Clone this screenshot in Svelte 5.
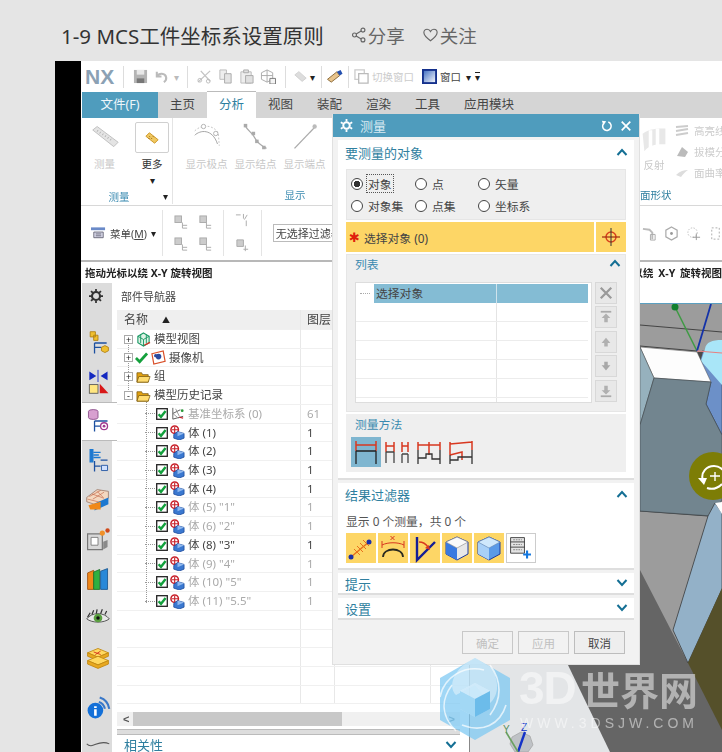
<script>
  const tabs = ["主页", "分析", "视图", "装配", "渲染", "工具", "应用模块"];
  const railIcons = ["assembly", "constraint", "part", "reuse", "role", "machine", "books", "eye", "stack", "info", "curve"];

  // kind: top = node directly under the root, child = feature under the history
  const rows = [
    { kind: "top", box: "+", icon: "view", name: "模型视图" },
    { kind: "top", box: "+", icon: "camera", check: "tick", name: "摄像机" },
    { kind: "top", box: "+", icon: "folder", name: "组" },
    { kind: "top", box: "-", icon: "folder", name: "模型历史记录" },
    { kind: "child", icon: "csys", name: "基准坐标系 (0)", layer: "61", muted: true },
    { kind: "child", icon: "body", name: "体 (1)", layer: "1" },
    { kind: "child", icon: "body", name: "体 (2)", layer: "1" },
    { kind: "child", icon: "body", name: "体 (3)", layer: "1" },
    { kind: "child", icon: "body", name: "体 (4)", layer: "1" },
    { kind: "child", icon: "body", name: '体 (5) "1"', layer: "1", muted: true },
    { kind: "child", icon: "body", name: '体 (6) "2"', layer: "1", muted: true },
    { kind: "child", icon: "body", name: '体 (8) "3"', layer: "1" },
    { kind: "child", icon: "body", name: '体 (9) "4"', layer: "1", muted: true },
    { kind: "child", icon: "body", name: '体 (10) "5"', layer: "1", muted: true },
    { kind: "child", icon: "body", name: '体 (11) "5.5"', layer: "1", muted: true },
    {}, {}, {}, {}, {}
  ];

  const radios = ["对象", "点", "矢量", "对象集", "点集", "坐标系"];
  const listButtons = ["x", "top", "up", "down", "bottom"];
</script>

{#snippet chevUp()}
  <svg class="chev" viewBox="0 0 12 8"><path d="M1.5 7 6 2l4.5 5" /></svg>
{/snippet}

{#snippet chevDown()}
  <svg class="chev" viewBox="0 0 12 8"><path d="M1.5 1 6 6l4.5-5" /></svg>
{/snippet}

{#snippet check()}
  <svg class="ic11" viewBox="0 0 12 12">
    <rect x=".7" y=".7" width="10.6" height="10.6" fill="#fff" stroke="#222" stroke-width="1.3" />
    <path d="M2.6 6.2 5 8.8 9.6 3" fill="none" stroke="#12a03c" stroke-width="2.4" />
  </svg>
{/snippet}

{#snippet treeIcon(name)}
  <svg class="ic15" viewBox="0 0 16 16">
    {#if name === "body"}
      <circle cx="5" cy="5" r="4" fill="#fff" stroke="#c8202a" stroke-width="1.6" />
      <path d="M2 5h7M5 2v7" stroke="#c8202a" stroke-width="1.2" />
      <path d="M4 10l4-3 7 2v5l-5 2-6-2z" fill="#3a78d0" stroke="#1c4a9a" stroke-width=".8" />
      <path d="M8 7v5l7-3" fill="#8fb8ee" />
    {:else if name === "folder"}
      <path d="M1 4h5l1 2h6v8H1z" fill="#e0a010" stroke="#7a5a10" stroke-width=".8" />
      <path d="M3 8h12l-2 6H1z" fill="#ffdc70" stroke="#7a5a10" stroke-width=".8" />
    {:else if name === "view"}
      <path d="M8 1l6 3.5v7L8 15l-6-3.5v-7z" fill="#dff3e6" stroke="#1c9a66" stroke-width="1.2" />
      <path d="M2 4.5 8 8l6-3.5M8 8v7M5 2.7v9M11 2.7v9" fill="none" stroke="#1c9a66" />
      <path d="M9 14l6-3" stroke="#d0392b" stroke-width="1.4" />
    {:else if name === "camera"}
      <path d="M1 4l12-3 2 11-12 3z" fill="#fff" stroke="#d8502a" stroke-width="1.3" />
      <circle cx="8" cy="7" r="3" fill="#2a4aa0" />
      <circle cx="5" cy="6" r="1.8" fill="#2a4aa0" />
    {:else}
      <path d="M3 2v12M3 14l11-3M3 8l8-4" fill="none" stroke="#555" />
      <path d="M3 8l6 5M6 3l4 8" fill="none" stroke="#999" />
      <circle cx="13" cy="5" r="1.5" fill="#2a9a3a" />
      <path d="M10 12l4 1" stroke="#c8202a" stroke-width="1.3" />
    {/if}
  </svg>
{/snippet}

{#snippet railIcon(name)}
  <svg class="rail-ic" viewBox="0 0 30 30">
    {#if name === "assembly"}
      <path d="M6 2h6v6H6zM10 6h5v6h-5z" fill="#f0c030" stroke="#b08010" />
      <path d="M11 15v12M11 20h8M11 15h14" fill="none" stroke="#1c50a0" stroke-width="1.5" />
      <path d="M19 20l4-2 4 2v4l-4 2-4-2z" fill="#f0c030" stroke="#b08010" />
    {:else if name === "constraint"}
      <path d="M5 3l8 5-8 5zM26 3l-8 5 8 5z" fill="#1428c0" />
      <path d="M15 1v14" stroke="#1428c0" />
      <rect x="5" y="18" width="10" height="10" fill="#ffe680" stroke="#555" />
      <path d="M17 28V17l10 11z" fill="#d81818" />
    {:else if name === "part"}
      <path d="M4 4a5 2 0 0 1 11 0v7a5 2 0 0 1-11 0z" fill="#d8a0d0" stroke="#884a88" />
      <path d="M11 15v12M11 21h7M11 15h15" fill="none" stroke="#1c50a0" stroke-width="1.5" />
      <circle cx="22" cy="21" r="4" fill="#fff" stroke="#a03a90" stroke-width="1.5" />
      <circle cx="22" cy="21" r="1.6" fill="#a03a90" />
    {:else if name === "reuse"}
      <path d="M6 2h3v14H6zM10 5h8M10 8h6M10 11h8" stroke="#1c78d0" stroke-width="1.6" fill="#1c78d0" />
      <path d="M11 15v12M11 21h7M18 14h8" fill="none" stroke="#1c50a0" stroke-width="1.5" />
      <path d="M19 20h7v6h-7z" fill="#cfe0ff" stroke="#1c50a0" />
    {:else if name === "role"}
      <path d="M2 12 14 3l13 2v8L17 22 2 17z" fill="#f4d8c0" stroke="#a08070" />
      <path d="M5 11l13-7M9 14l13-8M3 14l16 4M8 8l14 5M14 5l7 7" stroke="#c06040" stroke-width=".7" />
      <path d="M11 19l16-7v8l-16 7z" fill="#1c78d0" />
      <path d="M4 21l14-4v9H6z" fill="#f08818" />
    {:else if name === "machine"}
      <path d="M3 8h17v18H3z" fill="#d8d8d8" stroke="#777" stroke-width="1.4" />
      <path d="M7 12h8v9H7z" fill="#fff" stroke="#777" />
      <path d="M21 17l5-2v8l-5 3z" fill="#8a8a8a" />
      <circle cx="20" cy="7" r="3" fill="#f09028" />
      <circle cx="26" cy="4" r="2.5" fill="#d04818" />
    {:else if name === "books"}
      <path d="M3 8l7-3v22H3z" fill="#f08818" stroke="#a05010" />
      <path d="M10 7l7-3v23h-7z" fill="#30b040" stroke="#207028" />
      <path d="M18 6l8-3v24h-8z" fill="#2888d8" stroke="#1c5890" />
    {:else if name === "eye"}
      <path d="M2 16c6-8 20-8 26 0-6 5-20 5-26 0z" fill="#e8e8e8" stroke="#444" />
      <circle cx="15" cy="15" r="5" fill="#5aa040" />
      <circle cx="15" cy="15" r="2" fill="#111" />
      <path d="M3 14l3-5M8 11l2-5M13 10l1-5M18 10l2-5M23 11l2-4" stroke="#333" stroke-width="1.4" />
    {:else if name === "stack"}
      <path d="M3 9 15 4l12 5-12 5z" fill="#ffd860" stroke="#c08810" />
      <path d="M3 9v4l12 5 12-5V9l-12 5z" fill="#e8a820" stroke="#c08810" />
      <path d="M3 18l12-5 12 5-12 5z" fill="#ffd860" stroke="#c08810" />
      <path d="M3 18v4l12 5 12-5v-4l-12 5z" fill="#e8a820" stroke="#c08810" />
      <path d="M10 8l8 3M18 7l-6 4" stroke="#d02818" />
    {:else if name === "info"}
      <circle cx="12" cy="18" r="9" fill="#1470d8" />
      <path d="M10.5 13h3v2h-3zM10.5 16.5h3V24h-3z" fill="#fff" />
      <path d="M17 3c6 2 10 6 11 13M16 8c4 1 6 4 7 8" fill="none" stroke="#3a78c8" stroke-width="2.4" />
    {:else}
      <path d="M2 16c7 7 13-6 26 0" fill="none" stroke="#555" stroke-width="1.2" />
      <path d="M15 27l-3 3h6z" fill="#bbb" />
    {/if}
  </svg>
{/snippet}

<div class="page">
  <header class="pagehead">
    <h1>1-9 MCS工件坐标系设置原则</h1>
    <span class="act share">
      <svg viewBox="0 0 16 18"><circle cx="13" cy="3.5" r="2.2" /><circle cx="3.5" cy="9" r="2.2" /><circle cx="13" cy="14.5" r="2.2" /><path d="M5.4 7.9 11 4.6M5.4 10.1 11 13.4" /></svg>
      分享
    </span>
    <span class="act">
      <svg viewBox="0 0 17 16"><path d="M8.5 14.5C3 10.5 1 8 1 5.2 1 3 2.7 1.5 4.7 1.5c1.6 0 3 .9 3.8 2.5.8-1.6 2.2-2.5 3.800-2.500 2 0 3.700 1.500 3.700 3.700 0 2.800-2 5.300-7.500 9.300z" /></svg>
      关注
    </span>
  </header>

  <section class="video">
    <div class="nx">
      <!-- quick access bar -->
      <div class="quick">
        <span class="logo">NX</span>
        <i class="vsep"></i>
        <svg class="q" viewBox="0 0 16 16"><path d="M1 1h14v14H1z" fill="#b4b4b4" /><path d="M4 1h8v5H4z" fill="#e8e8e8" /><path d="M4 10h8v5H4z" fill="#777" /></svg>
        <svg class="q" viewBox="0 0 16 16"><path d="M3 3v5h5M3.5 8C5 4 12 4 13 9c.3 2-1 4-2.5 5" fill="none" stroke="#bbb" stroke-width="2.2" /></svg>
        <span class="caret faint">▾</span>
        <i class="vsep"></i>
        <svg class="q" viewBox="0 0 16 16"><path d="M1 14 14 2M4 2l10 11" stroke="#c4c4c4" stroke-width="1.4" /><circle cx="3" cy="12" r="2" fill="none" stroke="#bbb" /><circle cx="12" cy="13" r="2" fill="none" stroke="#bbb" /></svg>
        <svg class="q" viewBox="0 0 16 16"><path d="M2 1h7v10H2z" fill="#eee" stroke="#bbb" /><path d="M7 5h7v10H7z" fill="#e4e4e4" stroke="#aaa" /></svg>
        <svg class="q" viewBox="0 0 16 16"><path d="M2 3h11v12H2z" fill="#eee" stroke="#bbb" /><path d="M5 1h5v3H5zM7 7h8v8H7z" fill="#e0e0e0" stroke="#aaa" /></svg>
        <svg class="q wide" viewBox="0 0 16 16"><path d="M7 1 13 4v7l-6 3-6-3V4z" fill="none" stroke="#aaa" /><path d="M1 7h12M7 1v13" stroke="#aaa" /><path d="M10 10h6v6h-6z" fill="#f4f4f4" stroke="#777" /></svg>
        <i class="vsep"></i>
        <svg class="q small" viewBox="0 0 16 16"><path d="M1 6l5-4 9 8-5 4z" fill="#ddd" stroke="#ccc" /></svg>
        <span class="caret">▾</span>
        <i class="vsep"></i>
        <svg class="q eraser" viewBox="0 0 18 16"><path d="M1 11 11 3l3 4-9 7z" fill="#e8c48c" stroke="#8a6a3a" /><path d="M11 3l4-2 2 4-3 2z" fill="#2450b0" /></svg>
        <i class="vsep"></i>
        <svg class="q switch" viewBox="0 0 16 16"><path d="M1 1h10v10H1z" fill="none" stroke="#ccc" stroke-width="1.4" /><path d="M5 5h10v10H5z" fill="#fff" stroke="#bbb" stroke-width="1.4" /></svg>
        <span class="qtext faint">切换窗口</span>
        <svg class="q win" viewBox="0 0 16 16"><defs><linearGradient id="winfill" x1="0" y1="0" x2="1" y2="1"><stop offset="0" stop-color="#3a6ac0" /><stop offset="1" stop-color="#fff" /></linearGradient></defs><rect x="1" y="1" width="14" height="14" fill="url(#winfill)" stroke="#14308c" stroke-width="2" /></svg>
        <span class="qtext">窗口</span>
        <span class="caret">▾</span>
        <span class="caret bar">▾</span>
      </div>

      <!-- ribbon tabs -->
      <nav class="tabs">
        <span class="file">文件(F)</span>
        {#each tabs as t, i}
          <span class="tab" class:active={i === 1}>{t}</span>
        {/each}
      </nav>

      <!-- ribbon -->
      <div class="ribbon">
        <div class="group first">
          <div class="items">
            <div class="tool dim">
              <svg class="big" viewBox="0 0 32 32"><path d="M2 8l5-4 24 18-5 5z" fill="#e4e4e4" stroke="#bbb" /><path d="M8 8l-1 2M11 10l-1 2M14 12l-1 2M17 14l-1 2M20 16l-1 2M23 18l-1 2" stroke="#aaa" /></svg>
              <span>测量</span>
            </div>
            <div class="tool more">
              <div class="morebox"><svg viewBox="0 0 16 16"><path d="M1 6l4-4 10 8-4 4z" fill="#f0c860" stroke="#c89020" /><path d="M5 6l1 1M7 8l1 1M9 6l1 1M4 8l1 1" stroke="#8a5a10" /></svg></div>
              <span>更多</span>
              <span class="caret">▾</span>
            </div>
          </div>
          <div class="gname"><b>测量</b><span class="caret gcaret">▾</span></div>
        </div>
        <div class="group second">
          <div class="items">
            <div class="tool dim wide">
              <svg class="big" viewBox="0 0 32 32"><path d="M2 14C8 8 22 6 28 24" fill="none" stroke="#999" /><path d="M2 9C10 1 24 2 29 12l1 14" fill="none" stroke="#bbb" stroke-dasharray="2 2" /><circle cx="12" cy="4" r="2.5" fill="#fff" stroke="#aaa" /><circle cx="26" cy="12" r="2.5" fill="#fff" stroke="#aaa" /></svg>
              <span>显示极点</span>
            </div>
            <div class="tool dim wide">
              <svg class="big" viewBox="0 0 32 32"><path d="M3 2c4 8 8 8 11 14s8 10 14 13" fill="none" stroke="#aaa" stroke-width="1.5" /><rect x="2" y="1" width="4" height="4" fill="#aaa" /><rect x="11" y="10" width="4" height="4" fill="#aaa" /><rect x="15" y="19" width="4" height="4" fill="#aaa" /><rect x="23" y="26" width="4" height="4" fill="#aaa" /></svg>
              <span>显示结点</span>
            </div>
            <div class="tool dim wide">
              <svg class="big" viewBox="0 0 32 32"><path d="M4 29 27 5" stroke="#aaa" stroke-width="1.5" /><circle cx="27" cy="4" r="2.5" fill="#bbb" /></svg>
              <span>显示端点</span>
            </div>
          </div>
          <div class="gname center"><b>显示</b></div>
        </div>
        <div class="group third">
          <div class="items">
            <div class="tool dim">
              <svg class="big" viewBox="0 0 32 32"><path d="M3 10c8-6 16-6 26-6v18c-10 0-18 0-24 8z" fill="#e8e8e8" /><path d="M12 6v20M20 4v20" stroke="#fff" stroke-width="4" /></svg>
              <span>反射</span>
            </div>
            <div class="stacked">
              <span><svg viewBox="0 0 14 12"><path d="M1 2l12-1M1 6l12-2M1 10l12-2" stroke="#ccc" stroke-width="2" /></svg>高亮线</span>
              <span><svg viewBox="0 0 14 12"><path d="M2 10 7 1l6 5-3 5z" fill="#bbb" /></svg>拔模分</span>
              <span><svg viewBox="0 0 14 12"><path d="M1 8c4-4 8-5 12-5-3 2-5 4-7 7z" fill="#ddd" /></svg>面曲率</span>
            </div>
          </div>
          <div class="gname"><b>面形状</b></div>
        </div>
      </div>

      <!-- selection bar -->
      <div class="selbar">
        <svg class="menu-ic" viewBox="0 0 16 14"><path d="M0 1h15v3H0z" fill="#6a8ac8" /><path d="M3 6h10v6H3z" fill="#dde" stroke="#667" /><path d="M5 8h6M5 10h6" stroke="#667" /></svg>
        <span class="menu-t">菜单(<u>M</u>)</span>
        <span class="caret">▾</span>
        <i class="vsep tall s1"></i>
        <div class="quad">
          {#each [0, 1, 2, 3] as k}
            <svg viewBox="0 0 16 16"><rect x="{k % 2 ? 2 : 1}" y="1" width="7" height="7" fill="#ccc" stroke="#aaa" /><path d="M9 8v6h5M9 11h5" fill="none" stroke="#aaa" /></svg>
          {/each}
        </div>
        <i class="vsep tall"></i>
        <div class="duo">
          <svg viewBox="0 0 16 16"><path d="M1 2h5M9 1v5M13 2l-3 5M12 8v6" stroke="#aaa" fill="none" /></svg>
          <svg viewBox="0 0 16 16"><path d="M2 2h7v7H2z" fill="#ccc" stroke="#aaa" /><path d="M11 8v6M9 12h5" stroke="#aaa" /></svg>
        </div>
        <i class="vsep tall"></i>
        <span class="combo">无选择过滤器</span>
        <div class="selright">
          <svg viewBox="0 0 16 16"><path d="M1 3l7 1 3 3v7" fill="none" stroke="#bbb" stroke-width="2" /><path d="M9 9h5v6H9z" fill="none" stroke="#aaa" /></svg>
          <svg viewBox="0 0 16 16"><path d="M8 1l6 3.5v7L8 15l-6-3.5v-7z" fill="none" stroke="#aaa" stroke-width="1.3" /><circle cx="8" cy="8" r="1.5" fill="#999" /></svg>
          <svg viewBox="0 0 16 16"><circle cx="7" cy="7" r="5" fill="none" stroke="#bbb" stroke-dasharray="1.5 1.5" /><path d="M7 12h8M11 8v7" stroke="#999" /></svg>
          <svg viewBox="0 0 16 16"><path d="M4 2h8v12H4z" fill="none" stroke="#aaa" stroke-dasharray="2 2" /></svg>
        </div>
      </div>

      <div class="cue">
        <span>拖动光标以绕 X-Y 旋转视图</span>
        <span class="cue-r">拖动光标以绕 X-Y 旋转视图</span>
      </div>

      <div class="main">
        <!-- resource bar -->
        <aside class="rail">
          <svg class="gear" viewBox="0 0 16 16"><circle cx="8" cy="8" r="4.6" fill="none" stroke="#333" stroke-width="2.4" /><path d="M8 0v3M8 13v3M0 8h3M13 8h3M2.3 2.3l2.2 2.2M11.5 11.5l2.2 2.2M2.3 13.7l2.2-2.2M11.5 4.5l2.2-2.2" stroke="#333" stroke-width="2" /></svg>
          {#each railIcons as name}
            <div class="rail-item {name}" class:current={name === "part"}>
              {@render railIcon(name)}
            </div>
          {/each}
        </aside>

        <!-- part navigator -->
        <div class="navigator">
          <div class="navtitle">部件导航器</div>
          <div class="colhead row">
            <span class="name">名称 <em>▲</em></span>
            <span class="layer">图层</span>
            <span></span>
            <span></span>
          </div>
          <div class="tree">
            <i class="trunk root"></i>
            <i class="trunk hist"></i>
            {#each rows as r}
              <div class="row" class:muted={r.muted}>
                <span class="name {r.kind ?? ''}">
                  {#if r.kind === "top"}
                    <b class="box">{r.box}</b>
                    {#if r.check}
                      <svg class="tick" viewBox="0 0 14 12"><path d="M1 6l4 4 8-9" fill="none" stroke="#14a03c" stroke-width="3" /></svg>
                    {/if}
                    {@render treeIcon(r.icon)}
                  {:else if r.kind === "child"}
                    <i class="twig"></i>
                    {@render check()}
                    {@render treeIcon(r.icon)}
                  {/if}
                  <span class="label">{r.name ?? ""}</span>
                </span>
                <span class="layer">{r.layer ?? ""}</span>
                <span></span>
                <span></span>
              </div>
            {/each}
          </div>
          <div class="hscroll">
            <span class="arrow">&lt;</span>
            <span class="thumb"></span>
            <span class="arrow end">&gt;</span>
          </div>
          <div class="dbl"></div>
          <div class="related">
            <span>相关性</span>
            {@render chevDown()}
          </div>
        </div>

        <!-- graphics window -->
        <div class="view">
          <div class="viewtop"></div>
          <svg class="scene" viewBox="470 304 252 448" preserveAspectRatio="none">
            <rect x="470" y="304" width="252" height="448" fill="#e3e5e7" />
            <path d="M568 665 610 752H722V304H540z" fill="#656565" />
            <path d="M640 304h82v200l-14 12-35 114 15 33-48-93z" fill="#9c9c9c" />
            <path d="M640 325l82 7M640 346l57 5M640 511l68 5" stroke="#444" fill="none" />
            <path d="M722 352l-20-1-7 26 16 5-5 22 16 31z" fill="#6c90c8" stroke="#2d3d55" stroke-width=".6" />
            <path d="M722 340c-10 0-16 2-17 9l-4 12 21 24z" fill="#a9e6f8" />
            <path d="M697 352h6l-3 10z" fill="#4a4a4a" />
            <path d="M640 347l57 5 14 30-57-4z" fill="#fdfdfd" stroke="#555" stroke-width=".5" />
            <path d="M640 347l14 31-14 47z" fill="#96b1bd" stroke="#444" stroke-width=".5" />
            <path d="M654 378l57 4-5 22 16 31v65l-10 16-72-5v-86z" fill="#72858f" stroke="#3c444a" stroke-width=".6" />
            <path d="M708 516l7-13 7 10v76l-34 74-15-33z" fill="#93b1c8" stroke="#333" stroke-width=".7" />
            <path d="M715 503l7-1v12z" fill="#fff" />
            <path d="M722 588l-34 75 34 67z" fill="#55502a" />
            <path d="M675 307l22 44" stroke="#3f9a44" stroke-width="1.5" />
            <circle cx="675" cy="307" r="3.5" fill="#12802e" />
            <path d="M711 304l-14 47" stroke="#1432a8" stroke-width="1.8" />
            <path d="M697 351l25 2" stroke="#e88080" stroke-width="1.2" />
            <circle cx="713" cy="476" r="24" fill="#7d7d06" />
            <path d="M703 481c-3-9 4-15 11-15 4 0 7 2 9 4M722 484c-4 4-9 6-15 4" fill="none" stroke="#fff" stroke-width="2" />
            <path d="M698 478l9 0-3 7z" fill="#fff" />
            <path d="M715 472v9M710 476h10" stroke="#fff" stroke-width="1.4" />
            <!-- triad -->
            <path d="M512 737l9-5 9 4 3 9-5 7h-13l-5-8z" fill="#bfc2c6" stroke="#9a9a9a" stroke-width=".6" />
            <path d="M518 752l7-20" stroke="#1432c8" stroke-width="2.4" />
            <path d="M518 752l-12-20" stroke="#6aa060" stroke-width="1.6" />
            <text x="503" y="733" class="tri" fill="#5a9060">Y</text>
            <text x="521" y="731" class="tri" fill="#1432c8">Z</text>
          </svg>
        </div>
      </div>

      <!-- measure dialog -->
      <div class="dialog">
        <div class="dlg-title">
          <svg class="dlg-gear" viewBox="0 0 16 16"><circle cx="8" cy="8" r="4" fill="none" stroke="#fff" stroke-width="2.4" /><path d="M8 0v3M8 13v3M1 4l2.5 1.5M12.5 10.5 15 12M1 12l2.5-1.5M12.5 5.5 15 4" stroke="#fff" stroke-width="2.2" /></svg>
          <span>测量</span>
          <svg class="dlg-btn" viewBox="0 0 14 14"><path d="M8.5 2.4A5 5 0 1 1 3 4" fill="none" stroke="#fff" stroke-width="1.8" /><path d="M1 1l5 .5L3 6z" fill="#fff" /></svg>
          <svg class="dlg-btn" viewBox="0 0 14 14"><path d="M2 2l10 10M12 2 2 12" stroke="#fff" stroke-width="2" /></svg>
        </div>

        <div class="sec s1">
          <div class="sec-head"><span>要测量的对象</span>{@render chevUp()}</div>
          <div class="radios">
            {#each radios as r, i}
              <span class="radio" class:on={i === 0}><i></i><em>{r}</em></span>
            {/each}
          </div>
          <div class="pick">
            <div class="pick-main"><b>✱</b><span>选择对象 (0)</span></div>
            <div class="pick-btn">
              <svg viewBox="0 0 20 20"><circle cx="10" cy="10" r="5" fill="none" stroke="#d8401c" stroke-width="1.4" /><path d="M1 10h18" stroke="#a02a10" stroke-width="1.2" /><path d="M10 1v18" stroke="#333" stroke-width="1" /></svg>
            </div>
          </div>
          <div class="listbox">
            <div class="list-head"><span>列表</span>{@render chevUp()}</div>
            <div class="list-body">
              <div class="table">
                {#each [0, 1, 2, 3, 4, 5, 6] as n}
                  <div class="trow" class:sel={n === 0}>
                    <span>{#if n === 0}<u></u>选择对象{/if}</span>
                    <span></span>
                  </div>
                {/each}
              </div>
              <div class="side">
                {#each listButtons as b}
                  <div class="side-btn">
                    <svg viewBox="0 0 16 16">
                      {#if b === "x"}
                        <path d="M2 2l12 12M14 2 2 14" stroke="#9a9a9a" stroke-width="2.6" />
                      {:else if b === "top"}
                        <path d="M2 2h12" stroke="#aaa" stroke-width="2" /><path d="M8 4l5 5h-3v5H6V9H3z" fill="#b0b0b0" />
                      {:else if b === "up"}
                        <path d="M8 3l5 6h-3v4H6V9H3z" fill="#b0b0b0" />
                      {:else if b === "down"}
                        <path d="M8 13 3 7h3V3h4v4h3z" fill="#a8a8a8" />
                      {:else}
                        <path d="M2 14h12" stroke="#aaa" stroke-width="2" /><path d="M8 12 3 7h3V2h4v5h3z" fill="#b0b0b0" />
                      {/if}
                    </svg>
                  </div>
                {/each}
              </div>
            </div>
          </div>
          <div class="method">
            <div class="method-t">测量方法</div>
            <div class="method-icons">
              <svg class="m cur" viewBox="0 0 30 30"><path d="M5 8h20M5 4v10M25 4v10" fill="none" stroke="#d83820" stroke-width="1.5" /><path d="M5 14h20M5 14v13M25 14v13" fill="none" stroke="#222" stroke-width="1.3" /></svg>
              <svg class="m" viewBox="0 0 30 30"><path d="M3 9h8M3 5v10M11 5v10M19 9h6M19 5v10M25 5v10" fill="none" stroke="#d83820" stroke-width="1.5" /><path d="M3 15h8M3 15v11M11 15v11M19 17h6M19 17v9M25 17v9" fill="none" stroke="#444" stroke-width="1.3" /></svg>
              <svg class="m" viewBox="0 0 30 30"><path d="M3 8h22M3 5v8M14 5v13M25 5v8" fill="none" stroke="#d83820" stroke-width="1.5" /><path d="M3 13v14M3 21h8v-4h6v5h8M25 13v14" fill="none" stroke="#333" stroke-width="1.3" /></svg>
              <svg class="m" viewBox="0 0 30 30"><path d="M3 7l22-2M3 5v13M25 4v9M3 18l12-3v8" fill="none" stroke="#d83820" stroke-width="1.5" /><path d="M3 18v9M3 23h8v-3h14M25 13v14" fill="none" stroke="#333" stroke-width="1.3" /></svg>
            </div>
          </div>
        </div>

        <div class="sec s2">
          <div class="sec-head"><span>结果过滤器</span>{@render chevUp()}</div>
          <div class="count">显示 0 个测量，共 0 个</div>
          <div class="filters">
            <div class="f"><svg viewBox="0 0 30 30"><path d="M5 24 24 8" stroke="#e8701c" stroke-width="1.5" /><path d="M8 16l6 6M11 13l6 6M14 10l6 6M17 7l6 6" stroke="#e8701c" /><circle cx="5" cy="24" r="2.5" fill="#1c30a8" /><circle cx="23" cy="9" r="2.5" fill="#1c30a8" /></svg></div>
            <div class="f"><svg viewBox="0 0 30 30"><path d="M5 24C5 14 25 14 25 24" fill="none" stroke="#2a2a20" stroke-width="1.8" /><path d="M4 12c6-3 16-3 22 0" fill="none" stroke="#d83820" /><path d="M4 8v7M26 8v7" stroke="#d83820" /><path d="M12.5 3l4 4M16.5 3l-4 4" stroke="#d83820" /></svg></div>
            <div class="f"><svg viewBox="0 0 30 30"><path d="M7 4v23L25 9" fill="none" stroke="#141e96" stroke-width="2.4" /><path d="M9 9c4 0 7 2 9 5" fill="none" stroke="#d83820" stroke-width="1.4" /><path d="M20 17l-5-2 4-3z" fill="#d83820" /></svg></div>
            <div class="f"><svg viewBox="0 0 30 30"><path d="M15 4l11 5v12l-11 6-11-6V9z" fill="#e8e8e8" stroke="#1c3aa0" /><path d="M4 9l11 6v12L4 21z" fill="#3a7ae0" /><path d="M15 4l11 5-11 6L4 9z" fill="#fafafa" stroke="#888" stroke-width=".6" /></svg></div>
            <div class="f"><svg viewBox="0 0 30 30"><path d="M15 4l11 5v12l-11 6-11-6V9z" fill="#5a9ae8" stroke="#1c3aa0" /><path d="M4 9l11 6v12L4 21z" fill="#a8d0f8" /><path d="M15 4l11 5-11 6L4 9z" fill="#cfe8fc" stroke="#6a8ab0" stroke-width=".6" /></svg></div>
            <div class="f plain"><svg viewBox="0 0 30 30"><path d="M3 3h16v18H3z" fill="#e4e4e4" stroke="#333" /><path d="M3 8h16M3 14h16" stroke="#333" /><path d="M6 5.5h10M6 11h10M6 17h10" stroke="#777" stroke-dasharray="2 1" /><path d="M22 18v9M17.5 22.5h9" stroke="#1478e0" stroke-width="2.4" /></svg></div>
          </div>
        </div>

        <div class="sec folded"><div class="sec-head"><span>提示</span>{@render chevDown()}</div></div>
        <div class="sec folded"><div class="sec-head"><span>设置</span>{@render chevDown()}</div></div>

        <div class="dlg-foot">
          <button disabled>确定</button>
          <button disabled>应用</button>
          <button>取消</button>
        </div>
      </div>
    </div>
    <div class="black"></div>
  </section>

  <!-- site watermark -->
  <div class="mark">
    <svg class="hex" viewBox="0 0 70 82">
      <path d="M35 0 70 20v42L35 82 0 62V20z" fill="#7cc8f2" fill-opacity=".72" />
      <path d="M35 0 52 10c8 16 6 28-2 35L35 27 16 37C8 29 12 11 35 0z" fill="#fff" fill-opacity=".42" />
      <path d="M0 39C4 19 24 7 44 12M66 47C60 67 42 75 22 67M50 7c12 16 12 34 0 50M16 73C2 59 0 43 12 27" fill="none" stroke="#fff" stroke-opacity=".7" stroke-width="1.6" />
      <path d="M20 33 35 25l15 8v18l-15 8-15-8z" fill="#fff" fill-opacity=".25" />
      <path d="M20 33l15 8 15-8-15-8z" fill="#cfeafa" fill-opacity=".85" />
      <path d="M35 41l15-8v18l-15 8z" fill="#6cbcea" />
      <path d="M20 33l15 8v18l-15-8z" fill="#a2d8f5" />
    </svg>
    <div class="mark-t">
      <div class="cn"><span>3D</span>世界网</div>
      <div class="en">WWW.3DSJW.COM</div>
    </div>
  </div>
</div>

<style>
  :global(body) {
    margin: 0;
    background: #e5e5e5;
  }
  .page {
    position: relative;
    width: 722px;
    height: 752px;
    overflow: hidden;
    font-family: "Noto Sans", "Noto Sans CJK SC", sans-serif;
  }
  .pagehead {
    height: 61px;
    display: flex;
    align-items: center;
    padding: 9px 0 0 61px;
    box-sizing: border-box;
    color: #666;
  }
  h1 {
    margin: 0 27px 0 0;
    font-size: 20.5px;
    font-weight: 400;
    color: #333;
    white-space: nowrap;
  }
  .act {
    display: flex;
    align-items: center;
    gap: 2px;
    font-size: 18.5px;
    margin-right: 18px;
  }
  .act svg {
    width: 15px;
    height: 16px;
    fill: none;
    stroke: #666;
    stroke-width: 1.3;
  }
  .video {
    display: flex;
    flex-direction: row-reverse;
    justify-content: flex-end;
    margin-left: 55px;
    height: 691px;
    filter: blur(0.35px);
  }
  .black {
    width: 26px;
    background: #000;
    flex: none;
  }
  .nx {
    position: relative;
    width: 641px;
    flex: none;
    background: #fff;
    display: flex;
    flex-direction: column;
    color: #444;
  }
  i {
    font-style: normal;
  }
  svg {
    display: block;
    flex: none;
  }
  .vsep {
    width: 1px;
    height: 22px;
    background: #ddd;
    margin: 0 6px;
    flex: none;
  }
  .caret {
    font-size: 10px;
    color: #222;
    flex: none;
    line-height: 1;
  }
  .caret.faint {
    color: #bbb;
    margin: 0 2px;
  }

  .quick {
    height: 31px;
    display: flex;
    align-items: center;
    padding-left: 4px;
  }
  .logo {
    font-family: "Liberation Sans", sans-serif;
    font-weight: 700;
    font-size: 21px;
    color: #8ba1b4;
    width: 32px;
  }
  .q {
    width: 15px;
    height: 15px;
    margin: 0 3px;
  }
  .q.small {
    width: 13px;
    margin-left: 2px;
  }
  .q.eraser {
    width: 18px;
    margin: 0 -2px;
  }
  .q.switch {
    margin: 0 3px 0 -1px;
  }
  .q.wide {
    width: 16px;
  }
  .qtext {
    font-size: 10.5px;
    margin-right: 5px;
  }
  .qtext.faint {
    color: #ccc;
  }
  .caret.bar {
    margin-left: 4px;
    border-top: 1px solid #222;
    line-height: 8px;
  }

  .tabs {
    height: 26px;
    display: flex;
    margin-left: 1px;
    background: #d5d5d5;
    font-size: 12.5px;
    line-height: 26px;
    color: #444;
  }
  .file {
    width: 76px;
    text-align: center;
    background: #4f9cbd;
    color: #eef6fa;
  }
  .tab {
    padding: 0 12px;
    width: 25px;
    text-align: center;
    white-space: nowrap;
  }
  .tab:last-child {
    width: 49px;
  }
  .tab.active {
    background: #fff;
    color: #2f7f9f;
    border-top: 1px solid #bbb;
    margin-top: -1px;
  }

  .ribbon {
    height: 87px;
    display: flex;
    border-bottom: 1px solid #d8d8d8;
    font-size: 10.5px;
  }
  .group {
    display: flex;
    flex-direction: column;
    border-right: 1px solid #e4e4e4;
    margin-bottom: 1px;
  }
  .group.first {
    width: 92px;
    padding-left: 1px;
    box-sizing: border-box;
  }
  .group.second {
    flex: 1;
    padding-left: 9px;
  }
  .group.third {
    width: 82px;
    border: 0;
    flex: none;
  }
  .items {
    display: flex;
    flex: 1;
  }
  .tool {
    width: 45px;
    display: flex;
    flex-direction: column;
    align-items: center;
    padding-top: 3px;
  }
  .tool span {
    white-space: nowrap;
    line-height: 16px;
  }
  .tool.wide {
    width: 49px;
  }
  .dim {
    color: #c8c8c8;
  }
  .big {
    width: 28px;
    height: 32px;
    margin-bottom: 3px;
  }
  .more {
    width: 36px;
    margin-left: 7px;
    color: #333;
    padding-top: 4px;
  }
  .morebox {
    width: 34px;
    height: 31px;
    border: 1px solid #d0d0d0;
    border-radius: 2px;
    box-sizing: border-box;
    display: flex;
    align-items: center;
    justify-content: center;
    margin-bottom: 3px;
  }
  .morebox svg {
    width: 14px;
    height: 14px;
  }
  .gname {
    position: relative;
    text-align: center;
    color: #3a8ab0;
    height: 18px;
    line-height: 18px;
    padding-right: 16px;
  }
  .gname b {
    font-weight: 400;
  }
  .gname.center {
    padding: 0;
    width: 226px;
  }
  .gcaret {
    position: absolute;
    right: 4px;
    top: 3px;
  }
  .stacked {
    display: flex;
    flex-direction: column;
    gap: 6px;
    padding: 5px 0 0 7px;
    color: #ccc;
    white-space: nowrap;
  }
  .stacked span {
    display: flex;
    align-items: center;
    gap: 5px;
  }
  .stacked svg {
    width: 14px;
    height: 14px;
  }
  .third .gname {
    text-align: left;
    color: #2f7f9f;
    padding-left: 0;
  }
  .third .tool {
    width: 34px;
    padding-top: 5px;
  }
  .third .big {
    margin-bottom: 2px;
  }

  .selbar {
    height: 56px;
    display: flex;
    align-items: center;
    padding-left: 10px;
    border-bottom: 2px solid #b8b8b8;
    box-sizing: border-box;
    font-size: 10.5px;
  }
  .menu-ic {
    width: 15px;
    height: 14px;
    margin-right: 4px;
  }
  .menu-t {
    white-space: nowrap;
    margin-right: 4px;
  }
  .vsep.tall {
    height: 46px;
    margin: 0 11px;
    background: #e4e4e4;
  }
  .vsep.s1 {
    margin-left: 6px;
  }
  .quad {
    display: grid;
    grid-template-columns: 16px 16px;
    gap: 7px 8px;
    width: 38px;
  }
  .quad svg,
  .duo svg,
  .selright svg {
    width: 15px;
    height: 15px;
  }
  .duo {
    display: flex;
    flex-direction: column;
    gap: 10px;
  }
  .combo {
    border: 1px solid #bbb;
    height: 18px;
    line-height: 17px;
    padding-left: 2px;
    width: 90px;
    overflow: hidden;
    white-space: nowrap;
    box-sizing: border-box;
    font-size: 11px;
  }
  .selright {
    margin-left: auto;
    display: flex;
    gap: 7px;
    width: 80px;
    overflow: hidden;
  }

  .cue {
    height: 21px;
    display: flex;
    justify-content: space-between;
    align-items: center;
    padding-left: 4px;
    font-size: 10.5px;
    font-weight: 700;
    color: #222;
    white-space: nowrap;
    overflow: hidden;
  }
  .cue-r {
    word-spacing: 2px;
  }

  .main {
    flex: 1;
    display: flex;
    min-height: 0;
  }
  .rail {
    width: 36px;
    flex: none;
    background: linear-gradient(to right, transparent 1px, #dcdcdc 1px, #dcdcdc 31px, #fff 31px);
    display: flex;
    flex-direction: column;
    align-items: flex-start;
  }
  .gear {
    width: 14px;
    height: 14px;
    margin: 6px 0 0 8px;
  }
  .rail-item {
    width: 31px;
    margin-left: 1px;
    height: 39.4px;
    flex: none;
    display: flex;
    align-items: center;
    justify-content: center;
    box-sizing: border-box;
  }
  .rail-item.assembly {
    margin-top: 20px;
  }
  .rail-item.current {
    background: #fff;
    width: 35px;
    border-top: 1px solid #bbb;
    border-bottom: 1px solid #bbb;
    padding-right: 4px;
  }
  .rail-item.info {
    margin-top: 11px;
  }
  .rail-item.curve {
    height: 30px;
  }
  .rail-ic {
    width: 26px;
    height: 26px;
  }

  .navigator {
    width: 352px;
    flex: none;
    display: flex;
    flex-direction: column;
    min-height: 0;
    font-size: 11.5px;
    border-right: 1px solid #888;
  }
  .navtitle {
    height: 27px;
    line-height: 28px;
    padding-left: 4px;
    font-size: 11px;
    color: #444;
  }
  .row {
    display: grid;
    grid-template-columns: 183px 34px 96px 1fr;
    height: 18.73px;
    box-sizing: border-box;
    border-bottom: 1px solid #f0f0f0;
  }
  .row > span + span {
    border-left: 1px solid #e8e8e8;
  }
  .row .layer {
    padding-left: 6px;
  }
  .colhead {
    height: 20px;
    background: #efefef;
    line-height: 20px;
    font-size: 12px;
    color: #444;
    flex: none;
  }
  .colhead .name {
    padding-left: 7px;
  }
  .colhead em {
    font-style: normal;
    font-size: 8px;
    color: #222;
    margin-left: 14px;
    vertical-align: 1px;
  }
  .tree {
    position: relative;
    height: 379px;
    flex: none;
    overflow: hidden;
  }
  .trunk {
    position: absolute;
    border-left: 1px dotted #999;
  }
  .trunk.root {
    left: 11px;
    top: 8px;
    height: 58px;
  }
  .trunk.hist {
    left: 29px;
    top: 72px;
    height: 201px;
  }
  .tree .row {
    line-height: 18px;
  }
  .row.muted {
    color: #aaa;
  }
  .name {
    display: flex;
    align-items: center;
    white-space: nowrap;
  }
  .name.top {
    padding-left: 7px;
  }
  .name.child {
    padding-left: 28px;
  }
  .box {
    width: 7px;
    height: 7px;
    border: 1px solid #aaa;
    font-size: 9px;
    line-height: 7px;
    text-align: center;
    font-weight: 400;
    margin-right: 1px;
    background: #fff;
    color: #222;
    position: relative;
    flex: none;
  }
  .tick {
    width: 13px;
    height: 12px;
    margin: 0 1px;
  }
  .twig {
    width: 10px;
    border-top: 1px dotted #999;
    margin-right: 1px;
    flex: none;
  }
  .ic11 {
    width: 12px;
    height: 12px;
  }
  .ic15 {
    width: 15px;
    height: 15px;
    margin: 0 3px 0 2px;
  }
  .hscroll {
    margin-top: 3px;
    height: 14px;
    display: flex;
    align-items: center;
    background: #f0f0f0;
    width: 343px;
    color: #555;
    font-weight: 700;
    font-size: 11px;
    font-family: "Liberation Sans", sans-serif;
    box-sizing: border-box;
    padding-left: 6px;
    flex: none;
  }
  .thumb {
    margin-left: 4px;
    width: 209px;
    height: 14px;
    background: #c8c8c8;
  }
  .arrow.end {
    margin-left: auto;
    margin-right: 5px;
    color: #6a8a9a;
  }
  .dbl {
    height: 4px;
    border-top: 1px solid #bbb;
    border-bottom: 1px solid #bbb;
    background: #ddd;
    margin-top: 3px;
    width: 343px;
    flex: none;
  }
  .related {
    flex: 1;
    display: flex;
    align-items: center;
    justify-content: space-between;
    width: 340px;
    padding-left: 7px;
    box-sizing: border-box;
    font-size: 13px;
    color: #2f7f9f;
  }

  .view {
    flex: 1;
    min-width: 0;
    display: flex;
    flex-direction: column;
  }
  .viewtop {
    height: 20px;
    border-bottom: 1px solid #5a9fc0;
    flex: none;
  }
  .scene {
    flex: 1;
    width: 100%;
    min-height: 0;
  }
  .tri {
    font-size: 10px;
    font-family: "Liberation Sans", sans-serif;
  }

  .chev {
    width: 12px;
    height: 8px;
    fill: none;
    stroke: #146f94;
    stroke-width: 2;
  }

  .dialog {
    position: absolute;
    left: 251px;
    top: 53px;
    width: 308px;
    height: 551px;
    background: #f2f2f2;
    border: 1px solid #e0e0e0;
    border-top: 0;
    box-sizing: border-box;
    display: flex;
    flex-direction: column;
    font-size: 11.8px;
    color: #444;
  }
  .dlg-title {
    height: 23px;
    flex: none;
    background: #4f9cbd;
    color: #d8eaf2;
    font-size: 13px;
    display: flex;
    align-items: center;
    padding: 0 7px;
    gap: 7px;
  }
  .dlg-title span {
    flex: 1;
  }
  .dlg-gear {
    width: 13px;
    height: 13px;
  }
  .dlg-btn {
    width: 12px;
    height: 12px;
  }
  .sec {
    background: #fff;
    margin: 3px 5px 0;
    border-bottom: 2px solid #dedede;
    flex: none;
    box-sizing: border-box;
    padding: 0 8px;
  }
  .sec.s1 {
    height: 340px;
  }
  .sec.s2 {
    height: 87px;
  }
  .sec.folded {
    height: 22px;
  }
  .sec-head {
    display: flex;
    align-items: center;
    justify-content: space-between;
    color: #2f7f9f;
    font-size: 13px;
    height: 29px;
    padding-bottom: 5px;
    box-sizing: border-box;
    margin: 0 -2px 0 -1px;
  }
  .s2 .sec-head {
    height: 26px;
    padding-bottom: 4px;
  }
  .folded .sec-head {
    height: 20px;
    padding-bottom: 0;
  }
  .radios {
    height: 51px;
    background: #efefef;
    border: 1px solid #e6e6e6;
    box-sizing: border-box;
    display: grid;
    grid-template-columns: 64px 63px 1fr;
    grid-template-rows: 22px 22px;
    align-content: center;
    padding-left: 4px;
    margin-bottom: 2px;
  }
  .radio {
    display: flex;
    align-items: center;
    gap: 4px;
  }
  .radio i {
    width: 10px;
    height: 10px;
    border: 1px solid #444;
    border-radius: 50%;
    background: #fff;
  }
  .radio.on i {
    background: radial-gradient(circle, #333 0 3px, #fff 3.5px);
  }
  .radio em {
    font-style: normal;
    padding: 0 1px;
  }
  .radio.on em {
    outline: 1px dotted #555;
  }
  .pick {
    display: flex;
    gap: 2px;
    height: 30px;
    margin-bottom: 2px;
  }
  .pick-main {
    flex: 1;
    background: #fdd666;
    display: flex;
    align-items: center;
    padding-left: 3px;
    gap: 4px;
  }
  .pick-main b {
    color: #e0200c;
    font-size: 13px;
    font-weight: 700;
    font-family: "DejaVu Sans", sans-serif;
  }
  .pick-btn {
    width: 30px;
    background: #fdd666;
    display: flex;
    align-items: center;
    justify-content: center;
  }
  .pick-btn svg {
    width: 20px;
    height: 20px;
  }
  .listbox {
    height: 158px;
    background: #efefef;
    border: 1px solid #e6e6e6;
    box-sizing: border-box;
    padding: 0 8px;
    margin-bottom: 2px;
  }
  .list-head {
    height: 27px;
    box-sizing: border-box;
    padding: 0 0 11px 0;
    margin-right: -4px;
    display: flex;
    justify-content: space-between;
    align-items: center;
    color: #3a8ab0;
  }
  .list-body {
    display: flex;
    gap: 3px;
  }
  .table {
    width: 237px;
    height: 121px;
    background: #fff;
    border: 1px solid #ddd;
    box-sizing: border-box;
    overflow: hidden;
    padding-top: 1px;
  }
  .trow {
    display: grid;
    grid-template-columns: 140px 1fr;
    height: 19px;
    border-bottom: 1px solid #ececec;
    line-height: 18px;
    box-sizing: border-box;
    margin-right: 3px;
  }
  .trow span + span {
    border-left: 1px solid #e4e4e4;
  }
  .trow.sel {
    background: linear-gradient(to right, transparent 18px, #84bcd4 18px);
    border-bottom: 0;
  }
  .trow.sel span + span {
    border-left-color: #cfe3ec;
  }
  .trow u {
    display: inline-block;
    width: 10px;
    margin: 0 6px 0 4px;
    border-top: 1px dotted #aaa;
    vertical-align: 4px;
    text-decoration: none;
  }
  .side {
    display: flex;
    flex-direction: column;
    gap: 2.4px;
  }
  .side-btn {
    width: 22px;
    height: 22px;
    background: #e8e8e8;
    border: 1px solid #d8d8d8;
    box-sizing: border-box;
    display: flex;
    align-items: center;
    justify-content: center;
  }
  .side-btn svg {
    width: 14px;
    height: 14px;
  }
  .method {
    height: 58px;
    background: #efefef;
    box-sizing: border-box;
    padding: 1px 5px;
  }
  .method-t {
    color: #3a8ab0;
    padding-left: 4px;
    height: 22px;
    line-height: 18px;
  }
  .method-icons {
    display: flex;
    gap: 2px;
  }
  .m {
    width: 30px;
    height: 30px;
  }
  .m.cur {
    background: #7fb6d0;
  }
  .count {
    color: #555;
    height: 24px;
    line-height: 24px;
  }
  .filters {
    display: flex;
    gap: 2px;
  }
  .f {
    width: 30px;
    height: 30px;
    background: #fdd666;
    flex: none;
    box-sizing: border-box;
  }
  .f.plain {
    background: #fff;
    border: 1px solid #ccc;
    padding: 1px;
  }
  .f svg {
    width: 100%;
    height: 100%;
  }
  .dlg-foot {
    flex: 1;
    display: flex;
    gap: 5px;
    justify-content: flex-end;
    padding: 11px 14px 0 0;
    align-items: flex-start;
  }
  button {
    width: 51px;
    height: 23px;
    padding: 0;
    background: #eee;
    border: 1px solid #bdbdbd;
    font: inherit;
    font-size: 11.5px;
    color: #444;
  }
  button:disabled {
    background: #f2f2f2;
    color: #c0c0c0;
    border-color: #c8c8c8;
  }

  .mark {
    position: absolute;
    left: 440px;
    top: 658px;
    display: flex;
    gap: 9px;
    pointer-events: none;
  }
  .hex {
    width: 70px;
    height: 82px;
  }
  .mark-t {
    color: rgba(255, 255, 255, 0.5);
    white-space: nowrap;
    padding-top: 8px;
    font-family: "Noto Sans CJK SC", sans-serif;
    font-weight: 700;
  }
  .cn {
    font-size: 39px;
    line-height: 44px;
    height: 44px;
    display: flex;
    align-items: center;
  }
  .cn span {
    font-size: 46px;
    font-family: "Liberation Sans", sans-serif;
    width: 62px;
    letter-spacing: -1px;
  }
  .en {
    font-family: "Liberation Sans", sans-serif;
    font-size: 14px;
    line-height: 14px;
    letter-spacing: 4px;
    font-weight: 400;
    margin-top: 6px;
    padding-left: 1px;
  }
</style>
